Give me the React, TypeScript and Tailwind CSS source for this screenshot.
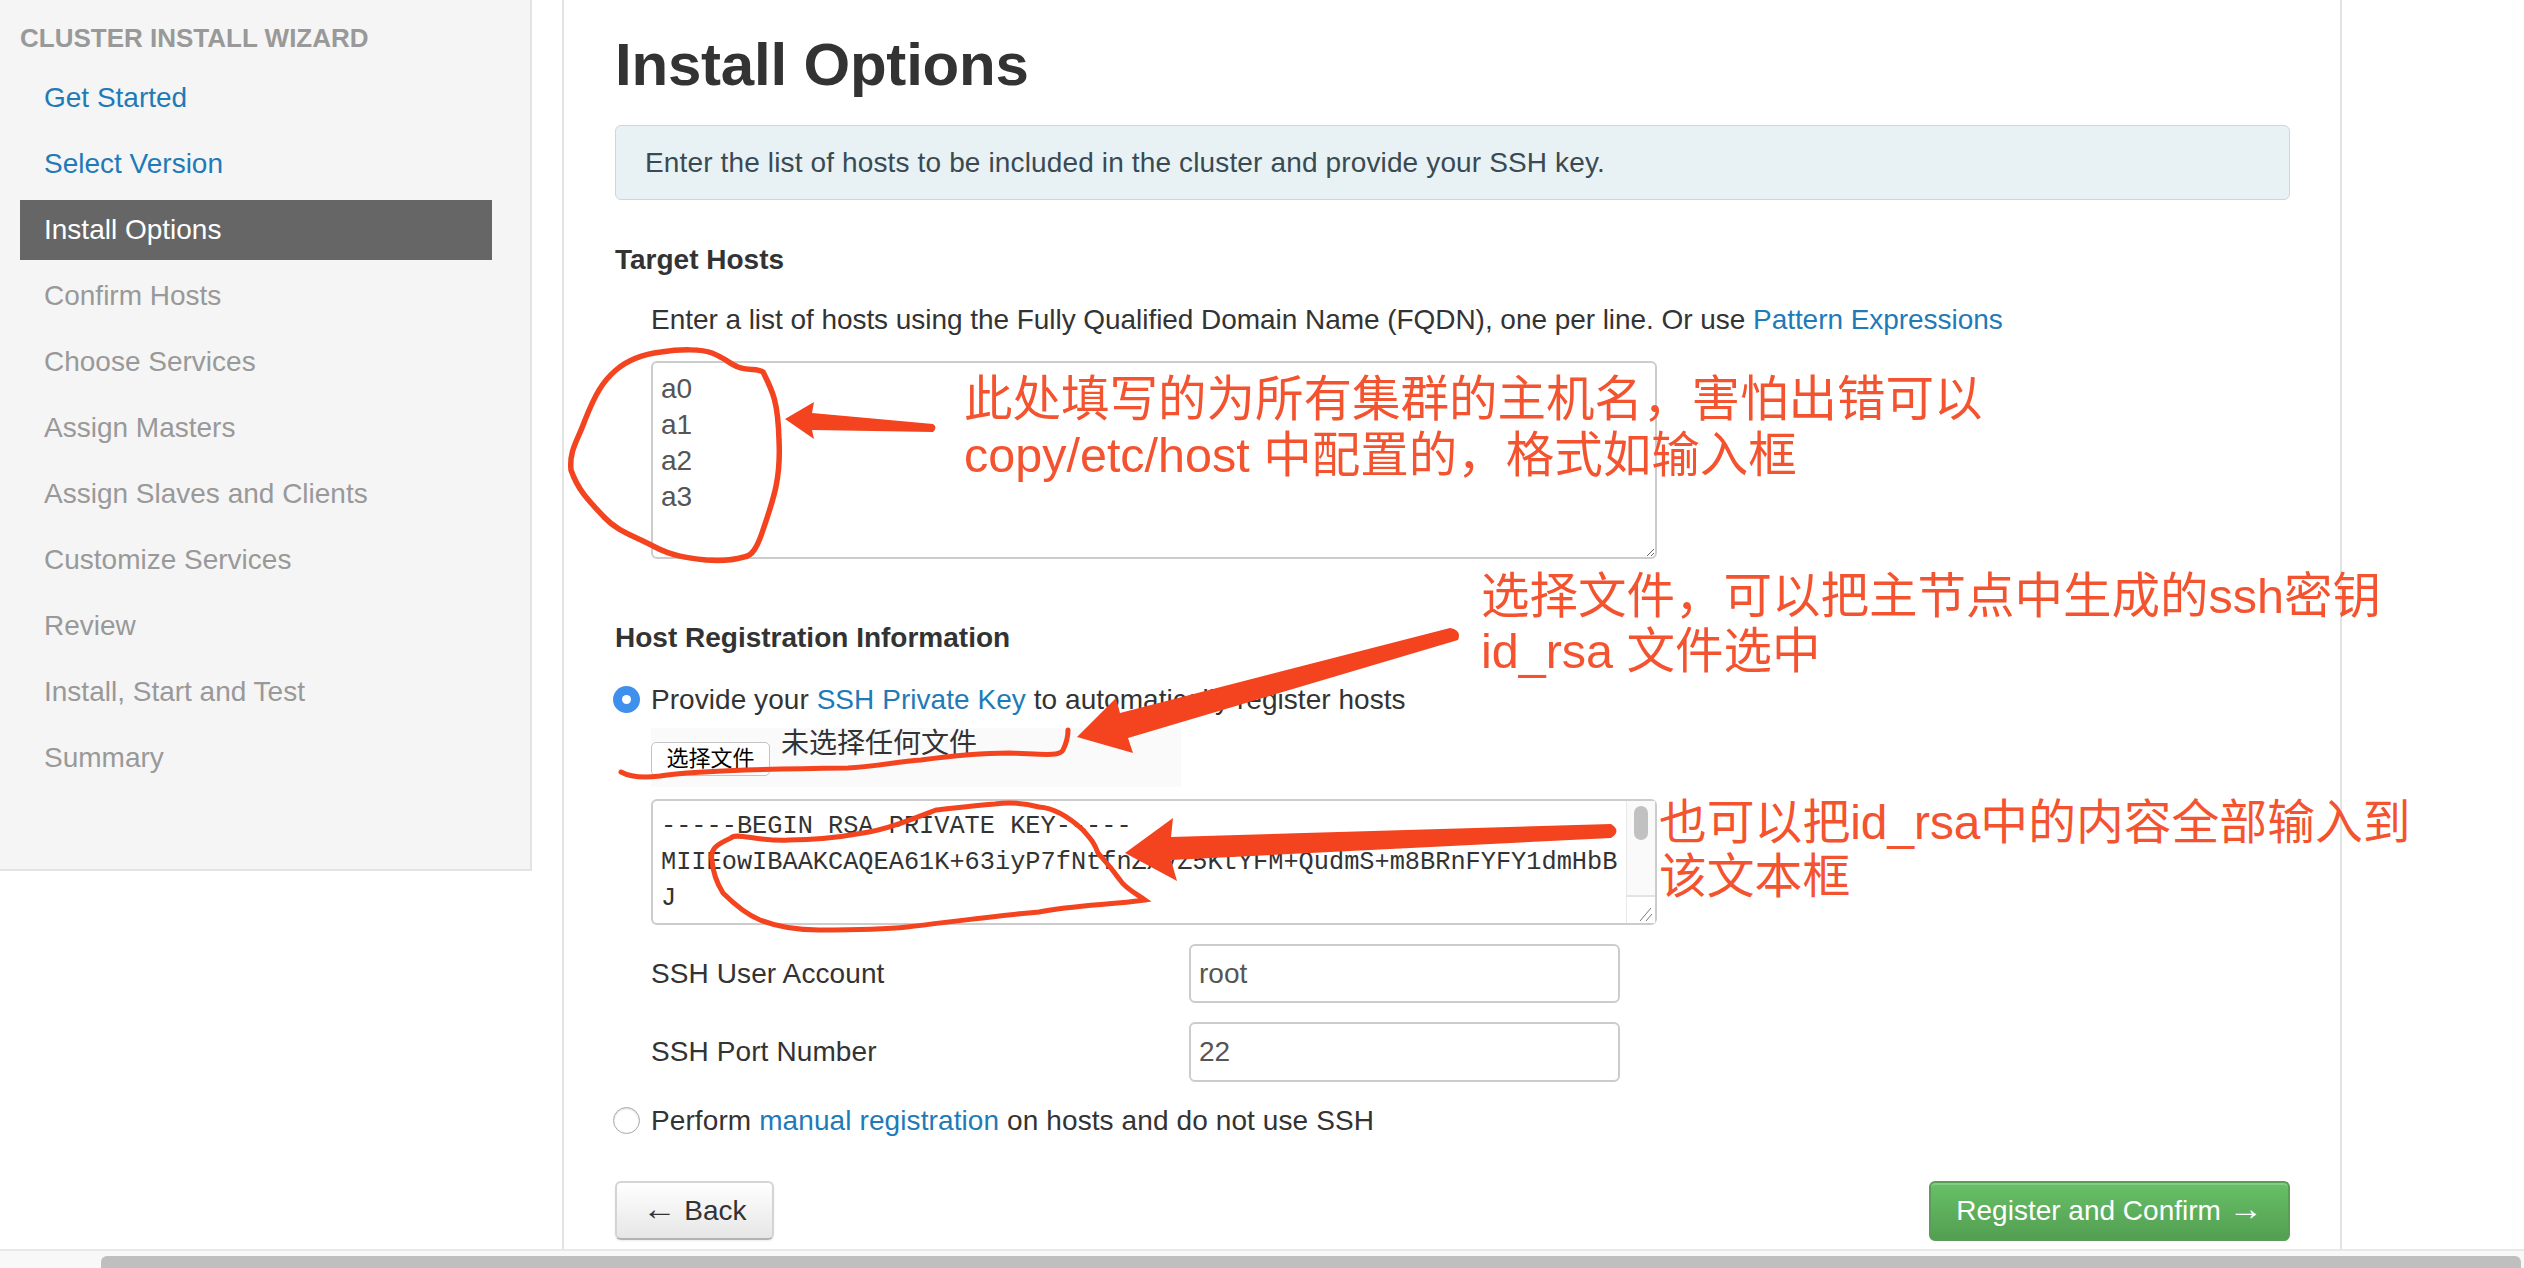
const SANS = "font-['Liberation_Sans','Noto_Sans_CJK_SC',sans-serif]";

const doneSteps = ['Get Started', 'Select Version'];
const todoSteps = [
  'Confirm Hosts',
  'Choose Services',
  'Assign Masters',
  'Assign Slaves and Clients',
  'Customize Services',
  'Review',
  'Install, Start and Test',
  'Summary',
];

const keyText = `-----BEGIN RSA PRIVATE KEY-----
MIIEowIBAAKCAQEA61K+63iyP7fNtfnZXVZ5KtYFM+QudmS+m8BRnFYFY1dmHbB
J
nrmzsaxcevuwnmqzemwnrsazxcvmnueoasczxnwmerszntxocaevmwpqzrnsuvxz`;

const Sidebar = () => (
  <aside className="w-[532px] h-[871px] shrink-0 bg-[#f5f5f5] border-r-2 border-b-2 border-[#e3e3e3] px-[20px] pt-[20px]">
    <div className="h-[36px] leading-[36px] text-[26px] font-bold text-[#999999]">CLUSTER INSTALL WIZARD</div>
    <nav className="mt-[12px] w-[472px] flex flex-col gap-[6px] text-[28px]">
      {doneSteps.map((s) => (
        <a key={s} className="h-[60px] leading-[60px] pl-[24px] text-[#1f7ab8]">{s}</a>
      ))}
      <a className="h-[60px] leading-[60px] pl-[24px] bg-[#666666] text-white">Install Options</a>
      {todoSteps.map((s) => (
        <a key={s} className="h-[60px] leading-[60px] pl-[24px] text-[#999999]">{s}</a>
      ))}
    </nav>
  </aside>
);

const Radio = ({ checked }: { checked?: boolean }) =>
  checked ? (
    <span className="absolute left-[-38px] top-[4px] w-[27px] h-[27px] rounded-full bg-[#3f8fec] flex items-center justify-center">
      <span className="w-[9px] h-[9px] rounded-full bg-white" />
    </span>
  ) : (
    <span className="absolute left-[-38px] top-[4px] w-[27px] h-[27px] rounded-full bg-white border border-[#a8a8a8] shadow-[inset_0_1px_2px_rgba(0,0,0,0.15)]" />
  );

const Annotations = () => (
  <>
    <svg className="absolute inset-0 pointer-events-none" width="2524" height="1268" viewBox="0 0 2524 1268" fill="none">
      {/* circle round the hosts */}
      <path
        d="M661 352C680 349 702 349 712 353C725 358 730 364 738 367C748 371 758 368 763 372C772 390 778 400 779 440C781 480 773 500 763 530C757 548 752 556 744 557C730 561 718 561 706 560C688 558 672 556 655 547C635 536 618 532 604 517C588 500 578 490 571 470C569 450 578 440 585 420C595 395 602 382 616 370C630 358 645 354 661 352Z"
        stroke="#f4441f"
        strokeWidth="5.5"
      />
      <path d="M785 419L814 402L812 413L933 424Q938 427 933 432L812 430L814 439Z" fill="#f4441f" />
      {/* file underline */}
      <path
        d="M621 772C632 778 645 778 660 776C690 771 760 769 848 768C880 766 895 762 921 760C950 756 985 753 1010 753C1040 754 1060 757 1063 750C1066 744 1068 738 1068 730"
        stroke="#f4441f"
        strokeWidth="5"
        strokeLinecap="round"
      />
      <path d="M1077 737L1116 698L1120 713L1450 628Q1462 630 1458 640L1128 738L1133 753Z" fill="#f4441f" />
      {/* key scribble */}
      <path
        d="M1145 900C1135 893 1125 888 1120 880C1110 866 1104 860 1098 853C1094 842 1090 838 1083 830C1070 818 1055 808 1039 807C1020 802 1008 802 995 804C970 806 955 808 936 810C910 820 885 830 863 833C835 838 810 840 789 840C760 842 735 832 731 838C715 845 710 850 712 860C713 875 718 885 723 893C735 905 748 915 760 920C780 928 800 930 819 930C850 930 880 930 907 927C950 922 1000 915 1039 912C1075 905 1110 905 1145 900Z"
        stroke="#f4441f"
        strokeWidth="5"
      />
      <path d="M1125 853L1173 818L1171 837L1611 824Q1622 831 1611 838L1171 860L1177 881Z" fill="#f4441f" />
    </svg>
    <div className={`absolute left-[964px] top-[371px] text-[48.5px] leading-[56px] text-[#f4532f] whitespace-nowrap ${SANS}`}>
      <div>此处填写的为所有集群的主机名，害怕出错可以</div>
      <div>copy/etc/host 中配置的，格式如输入框</div>
    </div>
    <div className={`absolute left-[1481px] top-[569px] text-[48.5px] leading-[55px] text-[#f4532f] whitespace-nowrap ${SANS}`}>
      <div>选择文件，可以把主节点中生成的ssh密钥</div>
      <div>id_rsa 文件选中</div>
    </div>
    <div className={`absolute left-[1659px] top-[796px] text-[47.8px] leading-[54px] text-[#f4532f] whitespace-nowrap ${SANS}`}>
      <div>也可以把id_rsa中的内容全部输入到</div>
      <div>该文本框</div>
    </div>
  </>
);

export default function App() {
  return (
    <div className={`relative w-[2524px] h-[1268px] overflow-hidden bg-white flex flex-col text-[#333333] ${SANS}`}>
      <div className="flex h-[1251px] shrink-0 border-b-2 border-[#e8e8e8]">
        <Sidebar />
        <main className="ml-[30px] w-[1780px] border-x-2 border-[#e3e3e3] pl-[51px] pr-[50px] text-[28px]">
          <h1 className="mt-[30px] h-[70px] leading-[70px] text-[60px] font-bold tracking-[-0.2px]">Install Options</h1>
          <div className="mt-[25px] h-[75px] leading-[73px] pl-[29px] bg-[#e8f2f5] border border-[#c5dae0] rounded-[6px] text-[#3a4a52] tracking-[0.14px]">
            Enter the list of hosts to be included in the cluster and provide your SSH key.
          </div>
          <h2 className="mt-[42px] leading-[36px] font-bold">Target Hosts</h2>
          <div className="ml-[36px]">
            <p className="mt-[24px] leading-[36px] tracking-[-0.05px]">
              Enter a list of hosts using the Fully Qualified Domain Name (FQDN), one per line. Or use{' '}
              <a className="text-[#1f7ab8]">Pattern Expressions</a>
            </p>
            <textarea
              readOnly
              className="block mt-[23px] w-[1006px] h-[198px] px-[8px] py-[8px] leading-[36px] text-[#555555] bg-white border-2 border-[#cccccc] rounded-[6px] outline-none resize-y"
              defaultValue={'a0\na1\na2\na3'}
            />
          </div>
          <h2 className="mt-[61px] leading-[36px] font-bold">Host Registration Information</h2>
          <div className="ml-[36px]">
            <div className="relative mt-[26px] leading-[36px] tracking-[0.05px]">
              <Radio checked />
              Provide your <a className="text-[#1f7ab8]">SSH Private Key</a> to automatically register hosts
            </div>
            <div className="mt-[10px] w-[530px] h-[59px] bg-[#fafafa] flex items-start">
              <button className="mt-[14px] w-[119px] h-[34px] leading-[32px] text-[22px] text-black bg-white border border-[#c4c4c4] rounded-[5px]">
                选择文件
              </button>
              <span className="ml-[11px] text-[28px] leading-[32px] text-[#333333]">未选择任何文件</span>
            </div>
            <div className="relative mt-[12px] w-[1006px] h-[126px]">
              <textarea
                readOnly
                className="block w-full h-full pl-[8px] pr-[30px] pt-[8px] font-['Liberation_Mono',monospace] text-[25.3px] leading-[36px] text-[#333333] bg-white border-2 border-[#cccccc] rounded-[6px] outline-none resize-none overflow-hidden"
                defaultValue={keyText}
              />
              <div className="absolute right-[2px] top-[2px] bottom-[2px] w-[29px] bg-[#fafafa] border-l border-[#e8e8e8]">
                <div className="mt-[5px] mx-auto w-[14px] h-[34px] rounded-full bg-[#c1c1c1]" />
                <div className="absolute left-0 right-0 top-[94px] bottom-0 bg-white border-t-2 border-[#e3e3e3]">
                  <svg className="absolute right-[2px] bottom-[2px]" width="14" height="14" viewBox="0 0 14 14" fill="none" stroke="#777777" strokeWidth="1">
                    <path d="M1 14L12 1M7 14L13 7" />
                  </svg>
                </div>
              </div>
            </div>
            <div className="mt-[19px] flex items-center h-[59px]">
              <label className="w-[538px] tracking-[0.1px]">SSH User Account</label>
              <input readOnly value="root" className="w-[431px] h-full px-[8px] text-[#555555] border-2 border-[#cccccc] rounded-[6px] outline-none" />
            </div>
            <div className="mt-[19px] flex items-center h-[60px]">
              <label className="w-[538px] tracking-[0.1px]">SSH Port Number</label>
              <input readOnly value="22" className="w-[431px] h-full px-[8px] text-[#555555] border-2 border-[#cccccc] rounded-[6px] outline-none" />
            </div>
            <div className="relative mt-[21px] leading-[36px] tracking-[0.1px]">
              <Radio />
              Perform <a className="text-[#1f7ab8]">manual registration</a> on hosts and do not use SSH
            </div>
          </div>
          <div className="mt-[42px] flex justify-between">
            <button className="w-[159px] h-[59px] rounded-[6px] border-2 border-[#d4d4d4] border-b-[#b3b3b3] bg-gradient-to-b from-white to-[#e6e6e6] text-[#333333] shadow-[0_1px_2px_rgba(0,0,0,0.08)]">
              <span className="text-[34px] leading-[28px]">←</span> Back
            </button>
            <button className="w-[361px] h-[60px] rounded-[6px] border-2 border-[#5a9c58] bg-gradient-to-b from-[#67c067] to-[#539f52] text-white shadow-[inset_0_2px_0_rgba(255,255,255,0.2)]">
              Register and Confirm <span className="text-[34px] leading-[28px]">→</span>
            </button>
          </div>
        </main>
      </div>
      {/* horizontal browser scrollbar */}
      <div className="flex-1 bg-[#f8f8f8] pt-[5px] pl-[101px] pr-[3px]">
        <div className="h-[12px] rounded-t-[6px] bg-[#bfbfbf]" />
      </div>
      <Annotations />
    </div>
  );
}
